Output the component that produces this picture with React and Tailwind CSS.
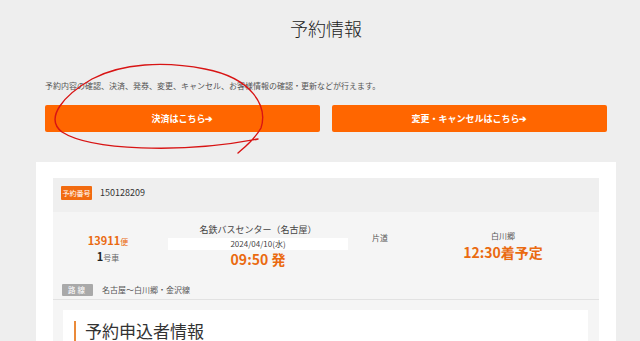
import React from 'react';

const jp = { fontFamily: '"Noto Sans CJK JP", "Noto Sans", sans-serif' };

// hand-drawn red circle drawn on top of the screenshot
const Scribble = () => (
  <svg
    className="absolute top-0 left-0 pointer-events-none"
    width="640"
    height="341"
    viewBox="0 0 640 341"
  >
    <path
      d="M238 153 C246 146 255 139 261 128 C268 106 252 78 205 69 C165 61 122 63 92 79 C64 95 44 118 62 132 C90 150 180 154 258 139"
      fill="none"
      stroke="#d81414"
      strokeWidth="1.4"
      strokeLinecap="round"
    />
  </svg>
);

const App = () => {
  return (
    <div className="relative w-[640px] h-[341px] overflow-hidden bg-[#eeeeee]" style={jp}>
      <div className="ml-[36px] w-[580px] pt-[16px]">
        <h1 className="h-[24px] leading-[24px] text-center text-[18px] font-light text-[#222]">予約情報</h1>

        <p className="mt-[40px] px-[9px] h-[12px] leading-[12px] text-[8px] text-[#555]">
          予約内容の確認、決済、発券、変更、キャンセル、お客様情報の確認・更新などが行えます。
        </p>

        <div className="mt-[13px] px-[9px] flex gap-[12px]">
          <button className="flex-1 h-[27px] rounded-[2px] bg-[#ff6600] text-white text-[9px] font-bold">
            決済はこちら➔
          </button>
          <button className="flex-1 h-[27px] rounded-[2px] bg-[#ff6600] text-white text-[9px] font-bold">
            変更・キャンセルはこちら➔
          </button>
        </div>

        <div className="mt-[30px] bg-white px-[17px] pt-[16px] h-[200px]">
          <div className="bg-[#f5f5f5] h-full">
            {/* reservation number */}
            <div className="h-[34px] bg-[#efefef] flex items-start pt-[8px] pl-[8px]">
              <span className="w-[31px] h-[14px] flex items-center justify-center bg-[#f26b10] text-white text-[7px] rounded-[1px]">
                予約番号
              </span>
              <span className="ml-[8px] h-[14px] leading-[14px] text-[9px] text-[#333]">150128209</span>
            </div>

            {/* trip info */}
            <div className="h-[72px] flex">
              <div className="w-[110px] pt-[19px] flex flex-col items-center gap-[2px]">
                <div className="h-[14px] leading-[14px] text-[#ea6a10]">
                  <span className="text-[11px] font-bold">13911</span>
                  <span className="text-[8px]">便</span>
                </div>
                <div className="h-[14px] leading-[14px]">
                  <span className="text-[11px] font-bold text-[#222]">1</span>
                  <span className="text-[8px] text-[#666]">号車</span>
                </div>
              </div>

              <div className="ml-[5px] w-[180px] pt-[12px] flex flex-col items-center">
                <div className="h-[12px] leading-[12px] text-[9px] text-[#444]">名鉄バスセンター（名古屋）</div>
                <div className="mt-[2px] w-full h-[12px] leading-[12px] bg-white text-center text-[8px] text-[#444]">
                  2024/04/10(水)
                </div>
                <div className="mt-[2px] h-[14px] leading-[14px] text-[14px] font-bold text-[#ea6a10]">09:50 発</div>
              </div>

              <div className="ml-[24px] w-[58px] pt-[20px]">
                <div className="h-[12px] leading-[12px] text-[8px] text-[#555]">片道</div>
              </div>

              <div className="w-[146px] pt-[18px] flex flex-col items-center">
                <div className="h-[12px] leading-[12px] text-[8px] text-[#555]">白川郷</div>
                <div className="mt-[1px] h-[18px] leading-[18px] text-[14px] font-bold text-[#ea6a10]">12:30着予定</div>
              </div>
            </div>

            {/* route */}
            <div className="h-[16px] flex items-start pl-[9px] border-b border-[#e2e2e2]">
              <span className="w-[31px] h-[12px] flex items-center justify-center bg-[#a9a9a9] text-white text-[7.5px] tracking-[2px] rounded-[1px]">
                路線
              </span>
              <span className="ml-[9px] h-[12px] leading-[12px] text-[8px] text-[#555]">名古屋〜白川郷・金沢線</span>
            </div>

            <div className="pl-[10px] pr-[11px] pt-[10px] h-[60px]">
              <div className="bg-white h-full pl-[11px] pt-[11px]">
                <div className="border-l-2 border-[#ea8a3a] pl-[9px] h-[40px] text-[17px] leading-[20px] text-[#333]">
                  予約申込者情報
                </div>
              </div>
            </div>
          </div>
        </div>
      </div>
      <Scribble />
    </div>
  );
};

export default App;
